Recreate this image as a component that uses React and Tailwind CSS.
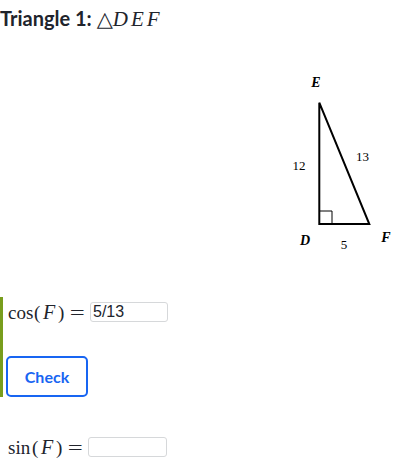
import React from 'react';

const serif = { fontFamily: '"Liberation Serif", "DejaVu Serif", serif' };

const Triangle = () => (
  <svg width="122" height="190" viewBox="0 0 122 190" className="block">
    <polygon points="39.3,32.7 39.3,154 89.3,154" fill="none" stroke="#000" strokeWidth="2" strokeLinejoin="miter" />
    <polyline points="39.3,141 52,141 52,154" fill="none" stroke="#000" strokeWidth="1" />
    <g fontFamily='"Liberation Serif", serif' fontSize="13" textAnchor="middle" fill="#000">
      <text x="36" y="17" fontSize="14" fontStyle="italic" fontWeight="bold">E</text>
      <text x="19" y="100">12</text>
      <text x="82.5" y="91">13</text>
      <text x="25" y="175" fontSize="14" fontStyle="italic" fontWeight="bold">D</text>
      <text x="64" y="179">5</text>
      <text x="106" y="171.5" fontSize="14" fontStyle="italic" fontWeight="bold">F</text>
    </g>
  </svg>
);

// fnWidth keeps the paren/F/= spacing where KaTeX put it
const MathLabel = ({ fn, fnWidth }) => (
  <span className="flex items-center text-[19px] leading-none text-[#21242c] whitespace-nowrap" style={serif}>
    <span className="inline-block" style={{ width: fnWidth }}>{fn}</span>
    <span className="inline-block w-[6px]">(</span>
    <span className="inline-block w-[18px] text-center italic text-[20px]">F</span>
    <span className="inline-block w-[6px]">)</span>
    <span className="inline-block w-[26px] text-center">
      <span className="inline-block scale-x-[1.4]">=</span>
    </span>
  </span>
);

export default function App() {
  return (
    <div className="w-[402px] h-[469px] bg-white overflow-hidden" style={{ fontFamily: 'Lato, "Noto Sans", sans-serif' }}>
      <h2 className="pt-[4px] h-[36px] text-[20px] leading-[28px] font-bold text-[#21242c] whitespace-nowrap">
        Triangle 1:{' '}
        <span className="text-[21px] font-normal" style={serif}>
          △<span className="italic tracking-[3px]">DEF</span>
        </span>
      </h2>

      <div className="mt-[34px] pl-[280px]">
        <Triangle />
      </div>

      <div className="mt-[37px] h-[100px] border-l-[3px] border-[#789d1d] pl-[3px] flex flex-col justify-between">
        <div className="h-[30px] flex items-center pl-[2px]">
          <MathLabel fn="cos" fnWidth={26} />
          <div className="w-[78px] h-[20px] border border-[#d6d8da] rounded-[3px] flex items-center px-[2px] text-[16px] text-[#21242c]" style={{ fontFamily: '"Liberation Sans", Arial, sans-serif' }}>
            5/13
          </div>
        </div>
        <button className="w-[82px] h-[41px] border-2 border-[#1865f2] rounded-[5px] text-[#1865f2] text-[16px] font-bold bg-white">
          Check
        </button>
      </div>

      <div className="mt-[35px] h-[30px] flex items-center pl-[8px]">
        <MathLabel fn="sin" fnWidth={24} />
        <div className="w-[79px] h-[20px] border border-[#d6d8da] rounded-[3px]" />
      </div>
    </div>
  );
}
